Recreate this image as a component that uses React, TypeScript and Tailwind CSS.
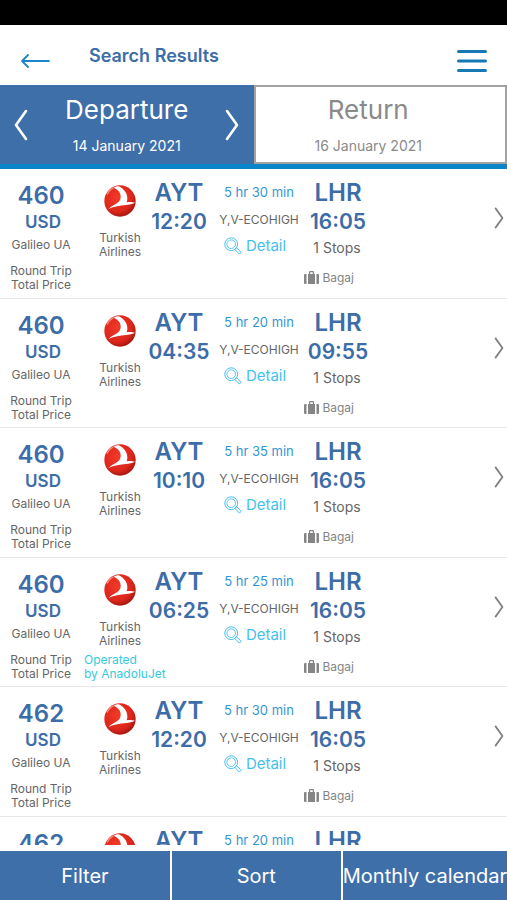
interface Flight {
  id: number;
  price: string;
  departureTime: string;
  arrivalTime: string;
  duration: string;
  operatedBy?: string;
}

const flights: Flight[] = [
  { id: 1, price: "460", departureTime: "12:20", arrivalTime: "16:05", duration: "5 hr 30 min" },
  { id: 2, price: "460", departureTime: "04:35", arrivalTime: "09:55", duration: "5 hr 20 min" },
  { id: 3, price: "460", departureTime: "10:10", arrivalTime: "16:05", duration: "5 hr 35 min" },
  {
    id: 4,
    price: "460",
    departureTime: "06:25",
    arrivalTime: "16:05",
    duration: "5 hr 25 min",
    operatedBy: "AnadoluJet",
  },
  { id: 5, price: "462", departureTime: "12:20", arrivalTime: "16:05", duration: "5 hr 30 min" },
  { id: 6, price: "462", departureTime: "04:35", arrivalTime: "09:55", duration: "5 hr 20 min" },
];

function Chevron({ className, flip = false }: { className: string; flip?: boolean }) {
  return (
    <svg viewBox="0 0 14 32" fill="none" stroke="currentColor" className={className} aria-hidden="true">
      <path
        d={flip ? "M12 2 2 16l10 14" : "M2 2l10 14L2 30"}
        strokeWidth="2.6"
        strokeLinecap="round"
        strokeLinejoin="round"
      />
    </svg>
  );
}

function AirlineLogo() {
  return (
    <svg viewBox="0 0 96 96" className="size-8" role="img" aria-label="Turkish Airlines">
      <defs>
        <radialGradient id="logoRed" cx="0.42" cy="0.38" r="0.62">
          <stop offset="0" stopColor="#f23a28" />
          <stop offset="0.75" stopColor="#dc261c" />
          <stop offset="1" stopColor="#a81811" />
        </radialGradient>
      </defs>
      <circle cx="48" cy="48" r="47" fill="url(#logoRed)" />
      <path d="M10 27C14 19 20 13 27 9" fill="none" stroke="#ff8f80" strokeWidth="4" strokeLinecap="round" />
      <path
        d="M29 8C34 5 40 4 44 4c17 8 26 22 26 36 0 5-1 8-2 12 9-1 17-1 25 1-9 4-18 6-27 7-18 2-35 4-53 12 10-9 19-13 27-18 9-6 12-15 9-26C47 19 39 12 29 8z"
        fill="#fff"
      />
    </svg>
  );
}

function SearchIcon() {
  return (
    <svg viewBox="0 0 18 18" fill="none" stroke="currentColor" className="size-[18px]" aria-hidden="true">
      <circle cx="7.2" cy="7.2" r="6.4" />
      <circle cx="7.2" cy="7.2" r="4.3" strokeWidth="0.9" />
      <path d="M10.8 12.4l1.7-1.7 4.7 4.6-1.8 1.8z" strokeLinejoin="round" />
    </svg>
  );
}

function LuggageIcon() {
  return (
    <svg viewBox="0 0 15 14" fill="currentColor" className="h-[14px] w-[15px]" aria-hidden="true">
      <path d="M1 3h1.500v10H1a1 1 0 0 1-1-1V4a1 1 0 0 1 1-1zM12.500 3H14a1 1 0 0 1 1 1v8a1 1 0 0 1-1 1h-1.500z" />
      <path
        fillRule="evenodd"
        d="M4 3h1V1.200C5 .5 5.500 0 6.200 0h2.600C9.500 0 10 .5 10 1.200V3h1v10H4zM6.200 3h2.600V1.200H6.200z"
      />
    </svg>
  );
}

function FlightRow({ flight }: { flight: Flight }) {
  return (
    <li className="grid min-h-[129px] shrink-0 grid-cols-[minmax(0,84fr)_minmax(0,66fr)_minmax(0,58fr)_minmax(0,102fr)_minmax(0,56fr)_minmax(0,141fr)] grid-rows-[92px_auto] whitespace-nowrap border-b border-[#e8e8e8] text-center text-[12px] leading-[14px] text-[#666] odd:min-h-[130px]">
      <div className="flex flex-col items-center pt-[13px] pr-0.5">
        <span className="text-[24px] leading-7 font-semibold text-[#3d6da8]">{flight.price}</span>
        <span className="pl-1 text-[17px] leading-6 font-semibold text-[#3d6da8]">USD</span>
        <span className="pt-1">Galileo UA</span>
      </div>
      <div className="flex flex-col items-center pt-4 pl-1.5">
        <AirlineLogo />
        <span className="pt-[14px]">
          Turkish
          <br />
          Airlines
        </span>
      </div>
      <div className="flex flex-col items-center pt-2.5 font-semibold text-[#3d6da8]">
        <span className="text-[24px] leading-7">AYT</span>
        <span className="text-[21px] leading-[30px]">{flight.departureTime}</span>
      </div>
      <div className="flex flex-col items-center pt-3">
        <span className="text-[13px] leading-[22px] text-[#2f97d4]">{flight.duration}</span>
        <span className="pt-[10px]">Y,V-ECOHIGH</span>
        <button type="button" className="mt-[9px] flex items-center gap-1 pr-2 text-[15px] leading-5 text-[#45bfee]">
          <SearchIcon />
          Detail
        </button>
      </div>
      <div className="flex flex-col items-center pt-2.5">
        <span className="text-[24px] leading-7 font-semibold text-[#3d6da8]">LHR</span>
        <span className="text-[21px] leading-[30px] font-semibold text-[#3d6da8]">{flight.arrivalTime}</span>
        <span className="pt-1 pr-0.5 text-[14px]">1 Stops</span>
      </div>
      <button type="button" aria-label="Flight details" className="flex items-center justify-end pt-1.5 pr-[3px] text-[#808080]">
        <Chevron className="h-[22px] w-[10px]" />
      </button>

      <div className="pt-[3px] pr-0.5">
        Round Trip
        <br />
        Total Price
      </div>
      <div className="col-span-2 pt-[3px] text-left text-[#35cbdc]">
        {flight.operatedBy && (
          <>
            Operated
            <br />
            by {flight.operatedBy}
          </>
        )}
      </div>
      <div className="col-span-2 flex items-start justify-end gap-[3px] pt-[10px] pr-3 text-[#858585]">
        <LuggageIcon />
        Bagaj
      </div>
    </li>
  );
}

export default function App() {
  return (
    <div className="flex h-screen flex-col bg-white font-['Inter','Liberation_Sans',sans-serif]">
      <div className="h-[25px] shrink-0 bg-black" />
      <header className="flex h-[60px] shrink-0 items-center">
        <button type="button" aria-label="Back" className="ml-5 pt-3 text-[#1b87c9]">
          <svg viewBox="0 0 30 16" fill="none" stroke="currentColor" className="h-4 w-[30px]" aria-hidden="true">
            <path d="M29 8H2M8 2L2 8l6 6" strokeWidth="1.8" strokeLinecap="round" strokeLinejoin="round" />
          </svg>
        </button>
        <h1 className="ml-[39px] pt-0.5 text-[18px] leading-6 font-semibold text-[#3d6da8]">Search Results</h1>
        <button type="button" aria-label="Menu" className="mt-3 mr-5 ml-auto text-[#1679b5]">
          <svg viewBox="0 0 30 24" fill="none" stroke="currentColor" className="h-6 w-[30px]" aria-hidden="true">
            <path d="M1.500 2.500h27M1.500 12h27M1.500 21.500h27" strokeWidth="3" strokeLinecap="round" />
          </svg>
        </button>
      </header>

      <nav className="flex shrink-0 border-b-[5px] border-[#0a85ca]">
        <div className="flex h-[79px] flex-1 items-center justify-between bg-[#3f6fa9] px-3.5 text-white">
          <button type="button" aria-label="Previous day">
            <Chevron className="h-8 w-[14px]" flip />
          </button>
          <button type="button" className="text-center">
            <span className="block text-[26px] leading-8">Departure</span>
            <span className="block pt-2.5 text-[14px] leading-5">14 January 2021</span>
          </button>
          <button type="button" aria-label="Next day">
            <Chevron className="h-8 w-[14px]" />
          </button>
        </div>
        <button
          type="button"
          className="h-[79px] flex-1 border-2 border-[#a3a3a3] pr-6 text-center text-[#8a8a8a]"
        >
          <span className="block text-[26px] leading-8">Return</span>
          <span className="block pt-2.5 text-[14px] leading-5">16 January 2021</span>
        </button>
      </nav>

      <ul className="mb-1.5 flex min-h-0 flex-1 flex-col overflow-y-auto [scrollbar-width:none]">
        {flights.map((flight) => (
          <FlightRow key={flight.id} flight={flight} />
        ))}
      </ul>

      <footer className="grid h-[49px] shrink-0 grid-cols-[170fr_169fr_164fr] gap-0.5 text-[20px] leading-6 whitespace-nowrap text-white">
        <button type="button" className="bg-[#3f6fa9]">Filter</button>
        <button type="button" className="bg-[#3f6fa9]">Sort</button>
        <button type="button" className="bg-[#3f6fa9]">Monthly calendar</button>
      </footer>
    </div>
  );
}
